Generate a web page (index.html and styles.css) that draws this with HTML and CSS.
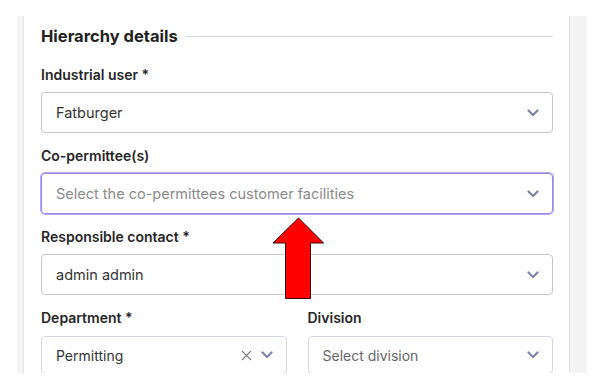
FILE: index.html
```html
<!DOCTYPE html>
<html lang="en">
  <head>
    <meta charset="UTF-8" />
    <meta name="viewport" content="width=device-width, initial-scale=1.0" />
    <title>Hierarchy details</title>
    <link rel="stylesheet" href="styles.css">
  </head>
  <body>
    <div class="frame">
      <div class="side-left"></div>

      <div class="content">
        <div class="section-title">
          <h3>Hierarchy details</h3>
          <div class="rule"></div>
        </div>

        <div class="form-group">
          <label>Industrial user *</label>
          <div class="select">
            <span class="value">Fatburger</span>
            <svg class="chevron" viewBox="0 0 12 8" width="12" height="8"><path d="M1.5 1.5 L6 6 L10.5 1.5" /></svg>
          </div>
        </div>

        <div class="form-group">
          <label>Co-permittee(s)</label>
          <div class="select focused">
            <span class="placeholder">Select the co-permittees customer facilities</span>
            <svg class="chevron" viewBox="0 0 12 8" width="12" height="8"><path d="M1.5 1.5 L6 6 L10.5 1.5" /></svg>
          </div>
        </div>

        <div class="form-group">
          <label>Responsible contact *</label>
          <div class="select">
            <span class="value">admin admin</span>
            <svg class="chevron" viewBox="0 0 12 8" width="12" height="8"><path d="M1.5 1.5 L6 6 L10.5 1.5" /></svg>
          </div>
        </div>

        <div class="form-row">
          <div class="form-group">
            <label>Department *</label>
            <div class="select small">
              <span class="value">Permitting</span>
              <svg class="clear" viewBox="0 0 12 12" width="11" height="11"><path d="M1.5 1.5 L10.5 10.5 M10.5 1.5 L1.5 10.5" /></svg>
              <svg class="chevron" viewBox="0 0 12 8" width="12" height="8"><path d="M1.5 1.5 L6 6 L10.5 1.5" /></svg>
            </div>
          </div>
          <div class="form-group">
            <label>Division</label>
            <div class="select small">
              <span class="placeholder dark">Select division</span>
              <svg class="chevron" viewBox="0 0 12 8" width="12" height="8"><path d="M1.5 1.5 L6 6 L10.5 1.5" /></svg>
            </div>
          </div>
        </div>
      </div>

      <div class="side-right"></div>

      <!-- annotation arrow -->
      <svg class="arrow" viewBox="0 0 53 83" width="53" height="83">
        <polygon points="26.5,1 1,26 13.5,26 13.5,81.5 38.5,81.5 38.5,26 51.5,26" />
      </svg>
    </div>
  </body>
</html>
```

FILE: styles.css
```css
* {
  margin: 0;
  padding: 0;
  box-sizing: border-box;
  font-family: Inter, "Noto Sans", sans-serif;
}

body {
  background-color: white;
  padding: 16px 0 0 17px;
}

.frame {
  position: relative;
  display: flex;
  width: 570px;
  height: 357px;
  overflow: hidden;
}

.side-left {
  width: 7px;
  background-color: #f4f4f4;
  border-right: 1px solid #e4e4e4;
}

.side-right {
  width: 18px;
  background-color: #f4f4f4;
  border-left: 1px solid #e2e2e2;
}

.content {
  flex: 1;
  padding: 10px 16px 0 17px;
}

.section-title {
  display: flex;
  align-items: center;
  gap: 8px;
  margin-bottom: 19px;
}

.section-title h3 {
  font-size: 16.5px;
  line-height: 20px;
  font-weight: 700;
  color: #222;
}

.rule {
  flex: 1;
  height: 1px;
  background-color: #d9d9d9;
}

.form-group {
  margin-bottom: 13px;
}

.form-group label {
  display: block;
  font-size: 14px;
  line-height: 20px;
  font-weight: 600;
  color: #262626;
  margin-bottom: 7px;
}

.select {
  display: flex;
  align-items: center;
  height: 41px;
  padding: 0 13px 0 14px;
  border: 1px solid #c6c6c6;
  border-radius: 4px;
  font-size: 14.5px;
}

.select.focused {
  border-color: #9b86ea;
  box-shadow: 0 0 0 1px #b7a7f3;
}

.form-row {
  display: grid;
  grid-template-columns: 1fr 1fr;
  gap: 21px;
}

.form-row label {
  margin-bottom: 8px;
}

.select.small {
  height: 38px;
  border-color: #d3d6e4;
  font-size: 14px;
  padding-left: 14px;
}

.value {
  flex: 1;
  color: #333;
}

.placeholder {
  flex: 1;
  color: #8a8a8a;
}

.placeholder.dark {
  color: #666;
}

.chevron path,
.clear path {
  fill: none;
  stroke: #7d83a6;
  stroke-width: 2.2;
  stroke-linecap: round;
}

.clear {
  margin-right: 9px;
}

.clear path {
  stroke: #777;
  stroke-width: 1.4;
}

.arrow {
  position: absolute;
  left: 255px;
  top: 201px;
}

.arrow polygon {
  fill: #ff0000;
  stroke: #3a0000;
  stroke-width: 1;
}
```
